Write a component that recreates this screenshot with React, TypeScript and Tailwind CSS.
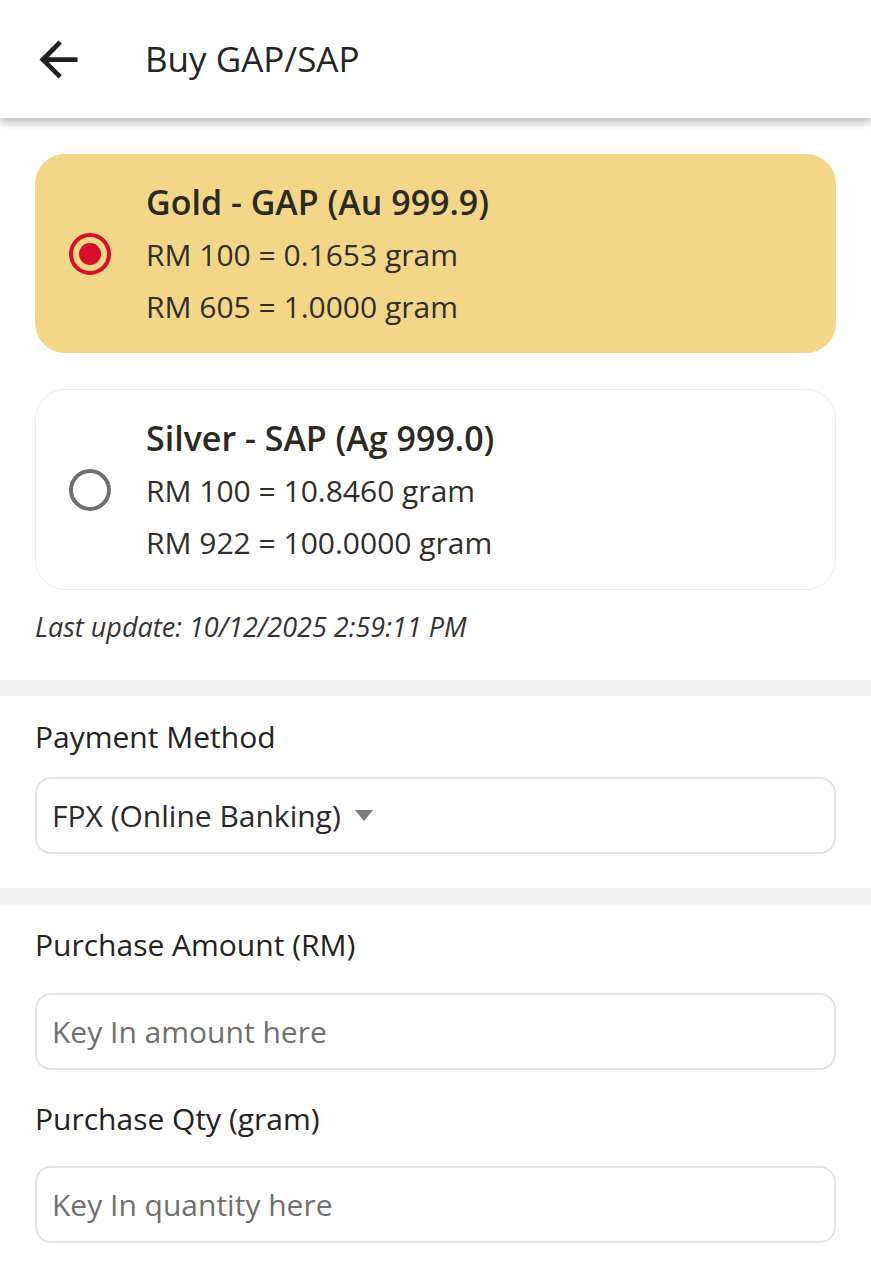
import React from 'react';

const font = { fontFamily: '"Open Sans", "Noto Sans", sans-serif' };

function Radio({ checked }: { checked: boolean }) {
    if (checked) {
        return (
            <div className="flex h-[42px] w-[42px] shrink-0 items-center justify-center rounded-full border-[4px] border-[#d7102a]">
                <div className="h-[22px] w-[22px] rounded-full bg-[#d7102a]" />
            </div>
        );
    }
    return <div className="h-[42px] w-[42px] shrink-0 rounded-full border-[4px] border-[#6e6e6e]" />;
}

function MetalCard({ title, lines, checked }: { title: string; lines: string[]; checked: boolean }) {
    return (
        <div
            className={
                checked
                    ? 'flex h-[199px] items-center rounded-[30px] bg-[#f3d688] pl-[34px]'
                    : 'flex h-[201px] items-center rounded-[30px] border border-[#eeeeee] bg-white pl-[33px]'
            }
        >
            <Radio checked={checked} />
            <div className="ml-[35px] flex flex-col">
                <div className="text-[34px] font-semibold leading-[54px] text-[#2a2a22]">{title}</div>
                {lines.map((l) => (
                    <div key={l} className="text-[30px] leading-[52px] text-[#2f2f2a]">{l}</div>
                ))}
            </div>
        </div>
    );
}

function Field({ placeholder }: { placeholder: string }) {
    return (
        <div className="flex h-[77px] items-center rounded-[16px] border-2 border-[#e2e2e2] bg-white px-[15px]">
            <input
                placeholder={placeholder}
                className="w-full bg-transparent text-[30px] text-[#333] outline-none placeholder:text-[#6f6f6f]"
                style={font}
            />
        </div>
    );
}

export default function App() {
    return (
        <div className="min-h-[1280px] w-full bg-white" style={font}>
            {/* header */}
            <div className="relative z-10 flex h-[118px] items-center bg-white shadow-[0_5px_8px_rgba(0,0,0,0.25)]">
                <button className="ml-[30px] flex h-[57px] w-[57px] items-center justify-center text-[#222]">
                    <svg viewBox="0 0 24 24" className="h-[57px] w-[57px]" fill="currentColor">
                        <path d="M20 11H7.83l5.59-5.59L12 4l-8 8 8 8 1.41-1.41L7.83 13H20v-2z" />
                    </svg>
                </button>
                <div className="ml-[58px] text-[35px] font-medium text-[#252525]">Buy GAP/SAP</div>
            </div>

            {/* metal cards */}
            <div className="flex flex-col gap-[36px] px-[35px] pt-[36px]">
                <MetalCard
                    checked
                    title="Gold - GAP (Au 999.9)"
                    lines={['RM 100 = 0.1653 gram', 'RM 605 = 1.0000 gram']}
                />
                <MetalCard
                    checked={false}
                    title="Silver - SAP (Ag 999.0)"
                    lines={['RM 100 = 10.8460 gram', 'RM 922 = 100.0000 gram']}
                />
            </div>
            <div className="px-[35px] pb-[35px] pt-[19px] text-[27px] italic leading-[36px] text-[#333]">
                Last update: 10/12/2025 2:59:11 PM
            </div>

            <div className="h-[16px] bg-[#f2f2f2]" />

            {/* payment method */}
            <div className="px-[35px] pb-[34px] pt-[20px]">
                <div className="text-[30px] font-medium leading-[42px] text-[#222]">Payment Method</div>
                <div className="mt-[19px] flex h-[77px] items-center rounded-[16px] border-2 border-[#e2e2e2] px-[15px]">
                    <span className="text-[30px] text-[#2a2a2a]">FPX (Online Banking)</span>
                    <svg viewBox="0 0 20 12" className="ml-[13px] h-[11px] w-[20px]" fill="#7a7a7a">
                        <path d="M0 0h20L10 12z" />
                    </svg>
                </div>
            </div>

            <div className="h-[17px] bg-[#f2f2f2]" />

            {/* purchase */}
            <div className="px-[35px] pt-[19px]">
                <div className="text-[30px] font-medium leading-[42px] text-[#222]">Purchase Amount (RM)</div>
                <div className="mt-[27px]">
                    <Field placeholder="Key In amount here" />
                </div>
                <div className="mt-[28px] text-[30px] font-medium leading-[42px] text-[#222]">Purchase Qty (gram)</div>
                <div className="mt-[26px]">
                    <Field placeholder="Key In quantity here" />
                </div>
            </div>
        </div>
    );
}
